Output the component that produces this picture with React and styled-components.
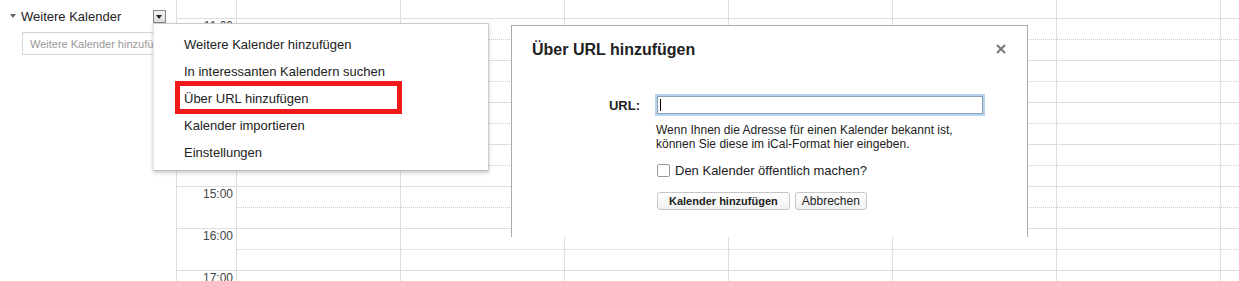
import styled, { createGlobalStyle } from 'styled-components';

const hours = ['', '11:00', '12:00', '13:00', '14:00', '15:00', '16:00', '17:00'];
const days = [0, 1, 2, 3, 4, 5, 6];
const menuItems = [
    'Weitere Kalender hinzufügen',
    'In interessanten Kalendern suchen',
    'Über URL hinzufügen',
    'Kalender importieren',
    'Einstellungen',
];

function App() {
    return (
        <Page>
            <GlobalStyle />
            <Sidebar>
                <SectionHeader>
                    <Toggle />
                    <SectionTitle>Weitere Kalender</SectionTitle>
                    <MenuButton />
                </SectionHeader>
                <AddInput placeholder="Weitere Kalender hinzufügen" />
            </Sidebar>
            <Calendar>
                {hours.map((h, i) => (
                    <Row key={i} first={i === 0}>
                        <TimeCell>{h}</TimeCell>
                        {days.map(d => <DayCell key={d} first={i === 0} />)}
                    </Row>
                ))}
            </Calendar>

            <Menu>
                {menuItems.map((item, i) => (
                    <MenuItem key={item} marked={i === 2}>{item}</MenuItem>
                ))}
            </Menu>

            <Dialog>
                <DialogHead>
                    <DialogTitle>Über URL hinzufügen</DialogTitle>
                    <CloseButton viewBox="0 0 10 10">
                        <path d="M1 1 L9 9 M9 1 L1 9" />
                    </CloseButton>
                </DialogHead>
                <FormGrid>
                    <Label>URL:</Label>
                    <UrlField />
                    <span />
                    <Help>
                        Wenn Ihnen die Adresse für einen Kalender bekannt ist,<br />
                        können Sie diese im iCal-Format hier eingeben.
                    </Help>
                    <span />
                    <CheckRow>
                        <Check />
                        Den Kalender öffentlich machen?
                    </CheckRow>
                    <span />
                    <Buttons>
                        <Button primary>Kalender hinzufügen</Button>
                        <Button>Abbrechen</Button>
                    </Buttons>
                </FormGrid>
            </Dialog>
        </Page>
    )
}

const GlobalStyle = createGlobalStyle`
body{
margin:0;
background:#fff;
font-family:"Liberation Sans", Arial, sans-serif;
color:#222;
overflow:hidden;
}
`
const Page = styled.div`
position:relative;
display:flex;
width:1239px;
height:281px;
overflow:hidden;
`
const Sidebar = styled.div`
width:176px;
flex-shrink:0;
padding-top:7px;
box-sizing:border-box;
`
const SectionHeader = styled.div`
display:flex;
align-items:center;
height:18px;
padding-left:10px;
`
const Toggle = styled.span`
width:0;
height:0;
border-left:3px solid transparent;
border-right:3px solid transparent;
border-top:4px solid #666;
margin-right:5px;
`
const SectionTitle = styled.span`
font-size:13px;
color:#222;
flex:1;
`
const MenuButton = styled.span`
position:relative;
width:11px;
height:11px;
margin-right:10px;
border:1px solid #888;
background:linear-gradient(#f4f4f4, #ddd);
&::after{
content:"";
position:absolute;
left:2px;
top:4px;
border-left:3.5px solid transparent;
border-right:3.5px solid transparent;
border-top:4px solid #222;
}
`
const AddInput = styled.input`
display:block;
margin:7px 0 0 22px;
width:150px;
height:23px;
box-sizing:border-box;
border:1px solid #d4d4d4;
padding:0 0 0 7px;
font-family:"Liberation Sans", Arial, sans-serif;
font-size:11px;
&::placeholder{
color:#999;
}
`
const Calendar = styled.div`
border-left:1px solid #ddd;
display:flex;
flex-direction:column;
`
const Row = styled.div`
display:grid;
grid-template-columns:59px repeat(7, 164px);
height:${props => props.first ? '18px' : '42px'};
flex-shrink:0;
border-top:${props => props.first ? 'none' : '1px solid #ddd'};
box-sizing:border-box;
`
const TimeCell = styled.div`
text-align:right;
padding:0 3px 0 0;
line-height:14px;
font-size:12px;
color:#444;
`
const DayCell = styled.div`
position:relative;
border-left:1px solid #ddd;
&::after{
content:"";
display:${props => props.first ? 'none' : 'block'};
position:absolute;
left:0;
right:0;
top:20px;
border-top:1px dotted #ccc;
}
`
const Menu = styled.div`
position:absolute;
left:153px;
top:23px;
width:336px;
height:148px;
box-sizing:border-box;
padding-top:8px;
background:#fff;
border:1px solid #ccc;
border-left-color:#e4e4e4;
border-bottom-color:#bbb;
box-shadow:0 2px 4px rgba(0,0,0,0.2);
z-index:2;
`
const MenuItem = styled.div`
position:relative;
height:27px;
line-height:26px;
padding-left:30px;
font-size:13px;
color:#222;
&::after{
content:"";
display:${props => props.marked ? 'block' : 'none'};
position:absolute;
left:21px;
top:-5px;
width:227px;
height:33px;
box-sizing:border-box;
border:5px solid #f11a1a;
}
`
const Dialog = styled.div`
position:absolute;
left:511px;
top:25px;
width:517px;
height:212px;
box-sizing:border-box;
background:#fff;
border:1px solid #aaa;
border-bottom:none;
z-index:2;
`
const DialogHead = styled.div`
display:flex;
justify-content:space-between;
align-items:center;
padding:14px 21px 0 20px;
height:20px;
`
const DialogTitle = styled.h2`
margin:0;
font-size:16px;
font-weight:bold;
color:#222;
`
const CloseButton = styled.svg`
width:10px;
height:10px;
margin-top:-2px;
stroke:#777;
stroke-width:2;
fill:none;
`
const FormGrid = styled.div`
display:grid;
grid-template-columns:108px 1fr;
column-gap:16px;
padding:36px 0 0 20px;
align-items:center;
`
const Label = styled.div`
text-align:right;
font-size:13px;
font-weight:bold;
color:#222;
`
const UrlField = styled.div`
position:relative;
width:326px;
height:18px;
margin-left:1px;
box-sizing:border-box;
border:1px solid #8ea0b6;
box-shadow:0 0 0 2px #b6d4f2;
&::before{
content:"";
position:absolute;
left:2px;
top:2px;
width:1px;
height:12px;
background:#000;
}
`
const Help = styled.div`
font-size:12px;
line-height:14px;
color:#222;
margin-top:9px;
`
const CheckRow = styled.label`
display:flex;
align-items:center;
gap:5px;
margin-top:12px;
font-size:13px;
color:#222;
`
const Check = styled.span`
width:11px;
height:11px;
margin-left:1px;
border:1px solid #999;
border-radius:2px;
background:#fff;
`
const Buttons = styled.div`
display:flex;
gap:5px;
margin-top:14px;
margin-left:1px;
`
const Button = styled.button`
height:18px;
padding:0 ${props => props.primary ? '11px' : '6px'};
font-family:"Liberation Sans", Arial, sans-serif;
font-size:${props => props.primary ? '11px' : '12px'};
font-weight:${props => props.primary ? 'bold' : 'normal'};
color:#222;
background:linear-gradient(#fff, #f1f1f1);
border:1px solid #c6c6c6;
border-radius:3px;
`
export default App;
